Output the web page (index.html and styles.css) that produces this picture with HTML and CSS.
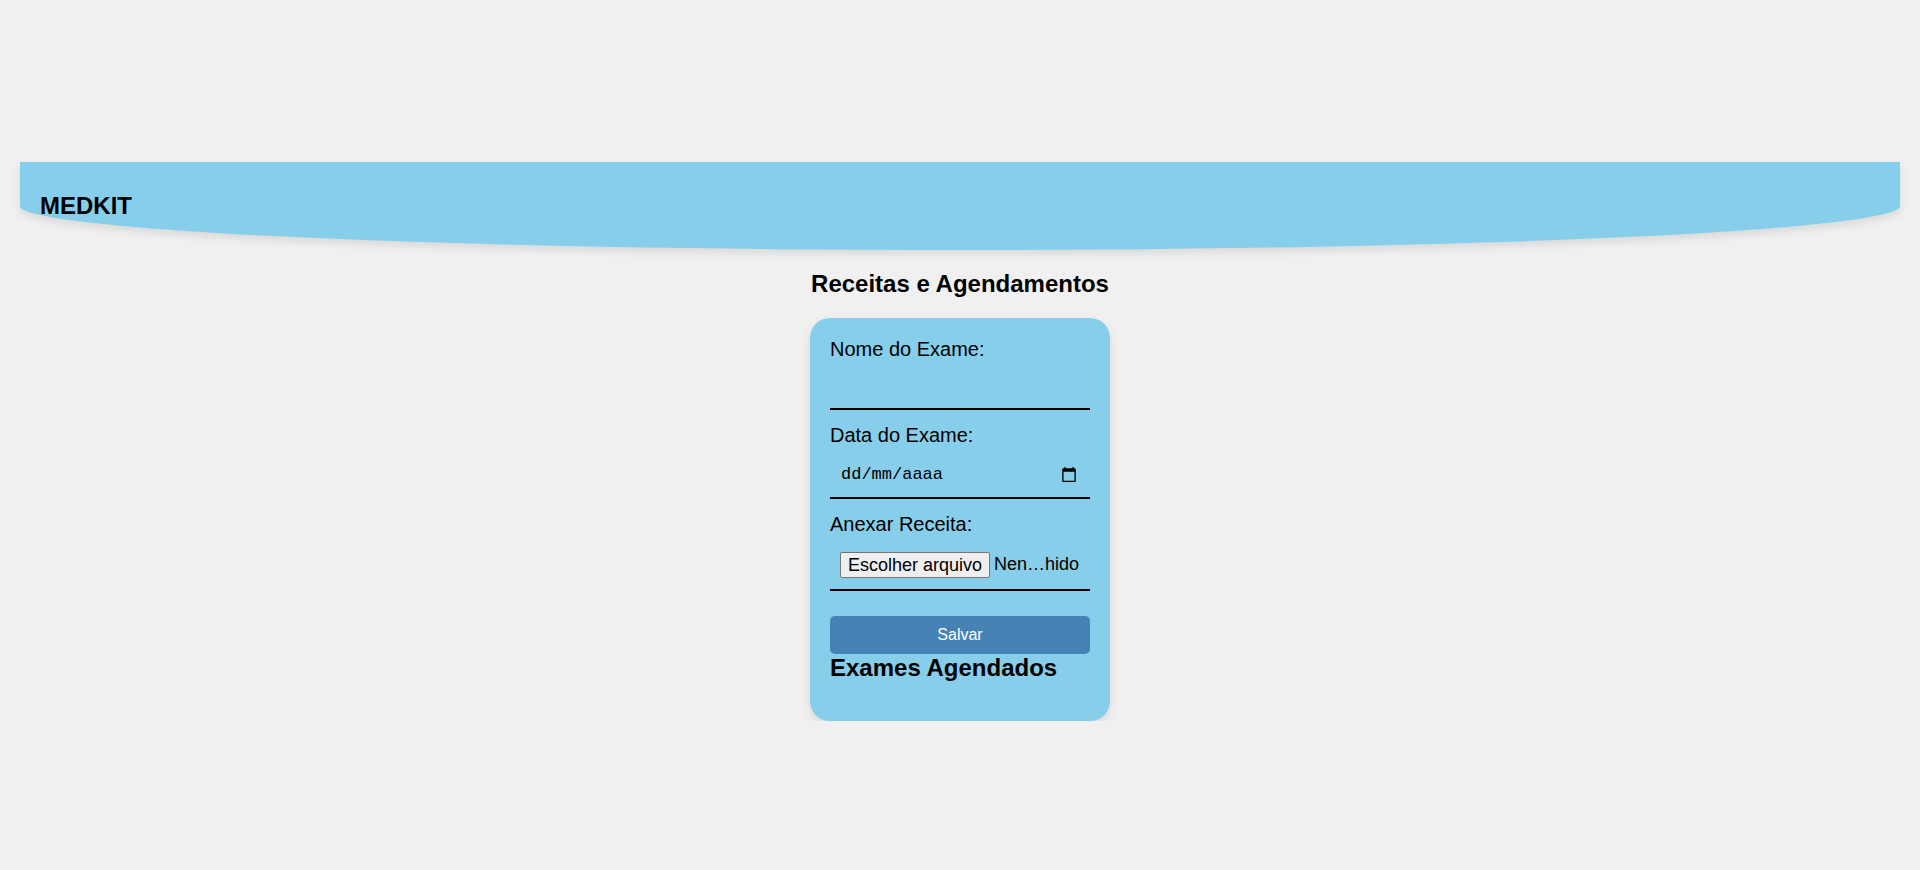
FILE: index.html
```html
<!DOCTYPE html>
<html lang="pt-BR">
<head>
<meta charset="utf-8">
<title>MEDKIT</title>
<link rel="stylesheet" href="styles.css">
</head>
<body>
<header class="topbar">
  <h1 class="brand">MEDKIT</h1>
</header>
<main class="page">
  <h2 class="page-title">Receitas e Agendamentos</h2>
  <section class="card">
    <form class="exam-form">
      <label class="field-label" for="nome">Nome do Exame:</label>
      <input class="field field-text" id="nome" type="text">
      <label class="field-label">Data do Exame:</label>
      <div class="field field-date">
        <span class="date-placeholder">dd/mm/aaaa</span>
        <svg class="calendar-icon" viewBox="2 1 20 22" width="14" height="15" aria-hidden="true">
          <path d="M20 3h-1V1h-2v2H7V1H5v2H4c-1.1 0-2 .9-2 2v16c0 1.1.9 2 2 2h16c1.1 0 2-.9 2-2V5c0-1.1-.9-2-2-2zm0 18H4V8h16v13z" fill="#000"/>
        </svg>
      </div>
      <label class="field-label">Anexar Receita:</label>
      <div class="field field-file">
        <span class="file-button">Escolher arquivo</span>
        <span class="file-name">Nen…hido</span>
      </div>
      <button class="save-button" type="button">Salvar</button>
    </form>
    <h2 class="list-title">Exames Agendados</h2>
  </section>
</main>
</body>
</html>
```
FILE: styles.css
```css
body {
  margin: 0;
  padding: 162px 20px 0;
  background: #f0f0f0;
  font-family: "Liberation Sans", Arial, sans-serif;
  color: #000;
}

.topbar {
  height: 88px;
  box-sizing: border-box;
  padding: 0 20px;
  display: flex;
  align-items: center;
  background: #87ceeb;
  border-radius: 0 0 50% 50%;
  box-shadow: 0 4px 8px rgba(0, 0, 0, 0.1);
}

.brand {
  margin: 0;
  font-size: 24px;
  font-weight: bold;
}

.page {
  display: flex;
  flex-direction: column;
  align-items: center;
}

.page-title {
  font-size: 24px;
  margin: 19.92px 0;
}

.card {
  width: 300px;
  box-sizing: border-box;
  padding: 20px;
  background: #87ceeb;
  border-radius: 20px;
  box-shadow: 0 4px 10px rgba(0, 0, 0, 0.1);
}

.exam-form {
  display: flex;
  flex-direction: column;
}

.field-label {
  font-size: 20px;
  line-height: 23px;
  margin-bottom: 5px;
}

.field {
  box-sizing: border-box;
  width: 100%;
  margin: 0 0 14px;
  padding: 0 10px;
  border: 0;
  border-bottom: 2px solid #000;
  background: transparent;
}

.field-text {
  height: 44px;
  padding: 10px;
  font: 18px "Liberation Sans", Arial, sans-serif;
  outline: none;
}

.field-date {
  height: 47px;
  display: flex;
  align-items: center;
  justify-content: space-between;
}

.date-placeholder {
  font: 17px "Liberation Mono", monospace;
  padding-left: 1px;
}

.calendar-icon {
  margin-right: 4px;
}

.field-file {
  height: 50px;
  display: flex;
  align-items: center;
  font-size: 18px;
}

.file-button {
  padding: 1px 7px;
  line-height: 22px;
  background: #efefef;
  border: 1px solid #767676;
  border-radius: 2px;
  white-space: nowrap;
}

.file-name {
  margin-left: 4px;
  white-space: nowrap;
}

.save-button {
  margin-top: 10.7px;
  height: 38px;
  border: 0;
  border-radius: 5px;
  background: #4682b4;
  color: #fff;
  font: 16px "Liberation Sans", Arial, sans-serif;
}

.list-title {
  font-size: 24px;
  margin: 0.7px 0 19px;
}
```
